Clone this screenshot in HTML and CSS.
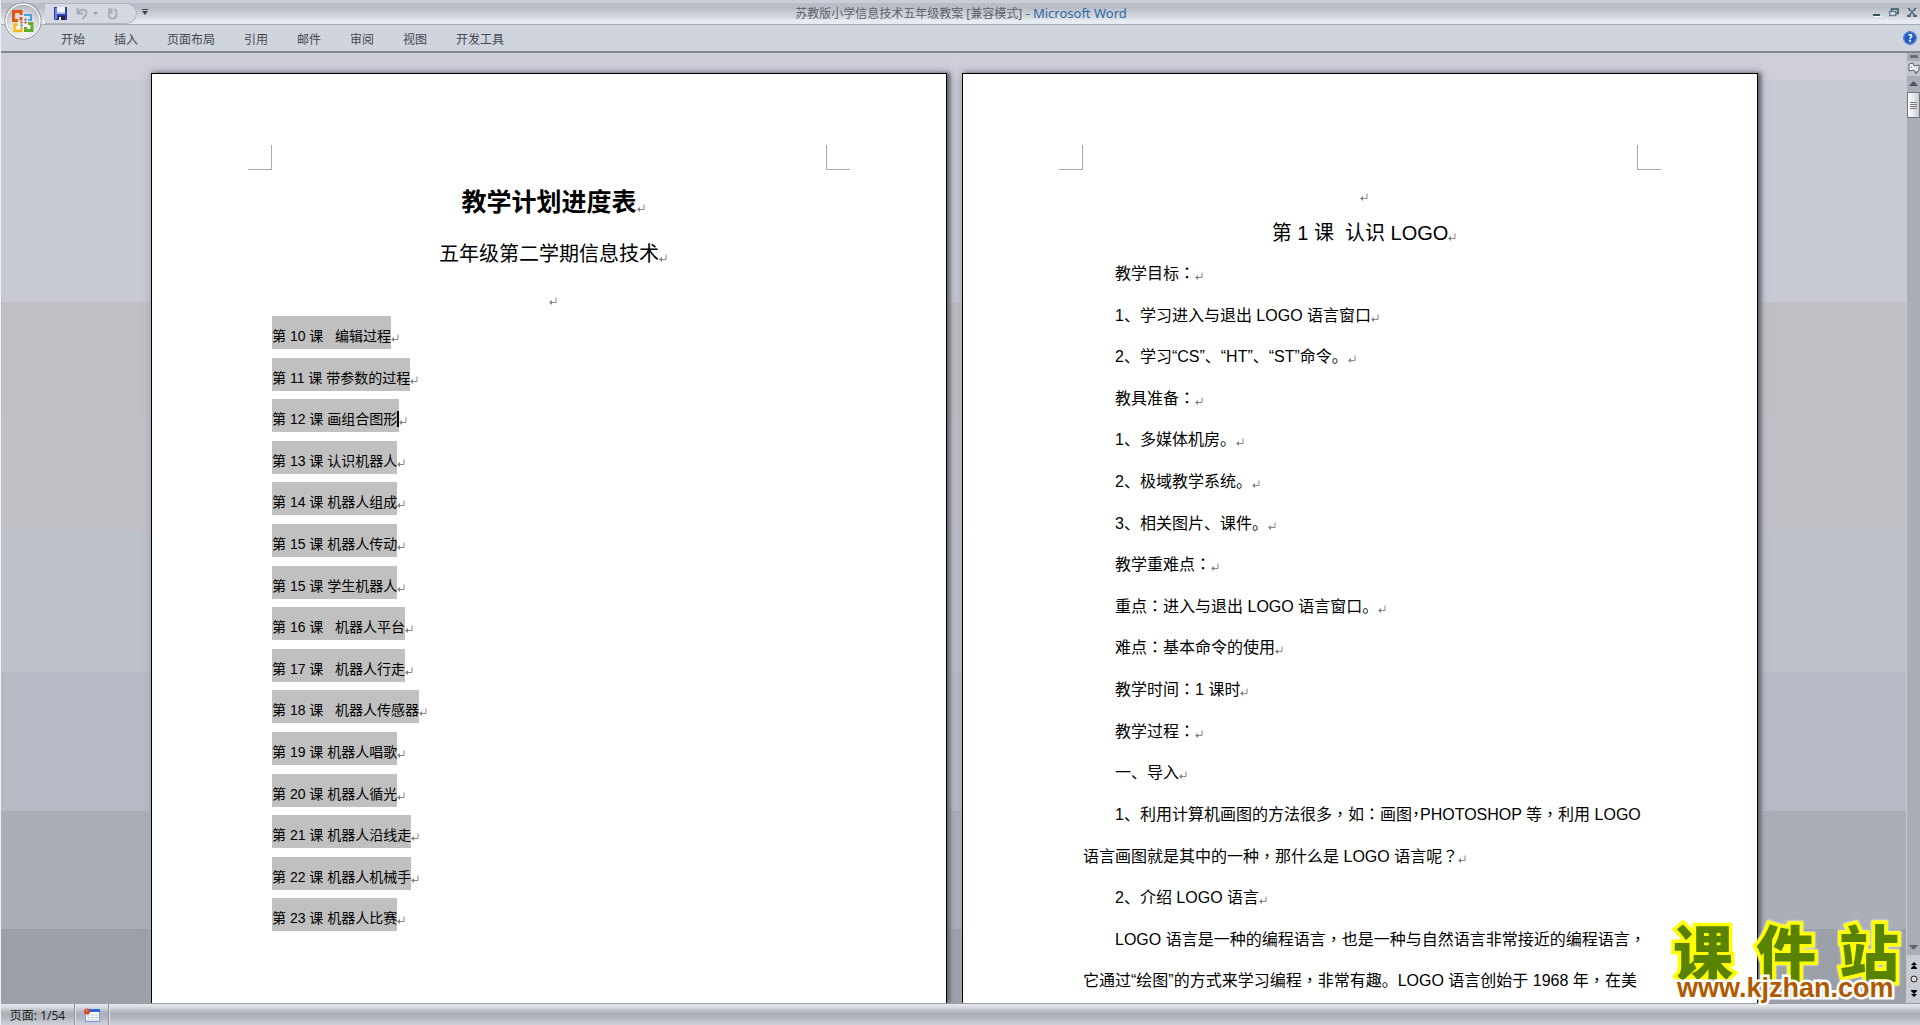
FILE: index.html
```html
<!DOCTYPE html>
<html lang="zh-CN">
<head>
<meta charset="utf-8">
<title>苏教版小学信息技术五年级教案 - Microsoft Word</title>
<link rel="stylesheet" href="styles.css">
</head>
<body>
<svg class="defs" aria-hidden="true">
  <symbol id="ret" viewBox="0 0 8 8"><path d="M7 0.5V5.5H2" fill="none" stroke="#858585"/><path d="M0 5.5L3 3V8Z" fill="#858585"/></symbol>
</svg>
<div class="app">
  <header class="titlebar">
    <div class="quick">
      <button type="button" aria-label="保存"><svg width="13" height="13" viewBox="0 0 13 13"><path d="M0 0H13V13H1L0 12Z" fill="#2c3fa8"/><path d="M1 1H3V12H1Z" fill="#6d86e0"/><rect x="3" y="0" width="8" height="7" fill="#eef2fb"/><rect x="3" y="5" width="8" height="2" fill="#b9c6e8"/><rect x="4" y="9" width="7" height="4" fill="#1b2350"/><rect x="5" y="10" width="2" height="3" fill="#fff"/></svg></button>
      <button type="button" aria-label="撤消"><svg width="12" height="13" viewBox="0 0 12 13"><path d="M1.500 1V6.500H7M2 6C4 2 10 1.500 10.500 5.500C10.700 8.500 8 9 6.500 12" fill="none" stroke="#a9adba" stroke-width="2"/></svg></button>
      <button type="button" aria-label="撤消列表"><svg width="5" height="4" viewBox="0 0 5 4"><path d="M0 0H5L2.500 3Z" fill="#9a9eaa"/></svg></button>
      <button type="button" class="redo" aria-label="恢复"><svg width="11" height="12" viewBox="0 0 11 12"><path d="M1 1.500H4.500V6M4 2C1 4 0.500 10.500 5.500 10.500C10.500 10.500 10.500 4 7.500 1" fill="none" stroke="#a9adba" stroke-width="2"/></svg></button>
    </div>
    <button type="button" class="more" aria-label="自定义快速访问工具栏"><svg width="6" height="6" viewBox="0 0 6 6"><path d="M0 0.500H6" stroke="#444"/><path d="M0 2H6L3 6Z" fill="#444"/></svg></button>
    <h1 class="caption">苏教版小学信息技术五年级教案 [兼容模式] <span>- Microsoft Word</span></h1>
    <div class="winbtns">
      <button type="button" aria-label="最小化"><svg width="8" height="9" viewBox="0 0 8 9"><rect y="6" width="7" height="2" fill="#355"/><rect x="1" y="8" width="7" height="1" fill="#fff"/></svg></button>
      <button type="button" aria-label="还原"><svg width="10" height="9" viewBox="0 0 10 9"><path d="M2.500 3V1H9V5.500H7" fill="none" stroke="#355" stroke-width="1.500"/><rect x="0.700" y="3.500" width="6" height="4" fill="#dfe3ea" stroke="#667890" stroke-width="1.400"/></svg></button>
      <button type="button" aria-label="关闭"><svg width="10" height="9" viewBox="0 0 10 9"><path d="M1 0.500H3M7 0.500H9M2 1L8 7.500M8 1L2 7.500M0 8H4M6 8H10" stroke="#58687c" stroke-width="1.800"/></svg></button>
    </div>
  </header>
  <nav class="ribbon">
    <button type="button">开始</button><button type="button">插入</button><button type="button">页面布局</button><button type="button">引用</button><button type="button">邮件</button><button type="button">审阅</button><button type="button">视图</button><button type="button">开发工具</button>
    <button type="button" class="help" aria-label="帮助">?</button>
  </nav>
  <button type="button" class="office" aria-label="Office 按钮">
    <svg width="38" height="38" viewBox="0 0 38 38">
      <defs><radialGradient id="orb" cx=".5" cy=".7" r=".7"><stop offset="0" stop-color="#fff"/><stop offset=".55" stop-color="#dddee2"/><stop offset="1" stop-color="#a9abb2"/></radialGradient></defs>
      <circle cx="19" cy="19" r="18" fill="url(#orb)" stroke="#73767e"/>
      <circle cx="19" cy="19" r="17" fill="none" stroke="#f4f4f6" stroke-width="1.500"/>
      <path d="M14 9.500H9.500V18.500H14M14 9.500H17V13M17 15V18.500" fill="none" stroke="#e2560f" stroke-width="3"/>
      <path d="M21 14V13H27V18H24" fill="none" stroke="#4aa3e0" stroke-width="2"/>
      <path d="M14 22.500H10.500V29H17.500V25" fill="none" stroke="#f5b81c" stroke-width="2.500"/>
      <path d="M21.500 25V28.500H28V21.500H24" fill="none" stroke="#66ab2d" stroke-width="3"/>
      <path d="M16.500 20.500H18.500M20.500 20.500H22.500" stroke="#d5402b" stroke-width="2"/><path d="M16.500 23.500H18.500M20.500 17.500H22.500" stroke="#3572c6" stroke-width="2"/>
    </svg>
  </button>
  <main class="workspace">
    <div class="desk">
      <article class="page">
        <i class="corner left"></i><i class="corner right"></i>
        <h2 class="title">教学计划进度表<svg class="ret"><use href="#ret"/></svg></h2>
        <p class="subtitle">五年级第二学期信息技术<svg class="ret"><use href="#ret"/></svg></p>
        <p class="blank"><svg class="ret"><use href="#ret"/></svg></p>
        <ul class="lessons">
          <li><mark>第 10 课   编辑过程</mark><svg class="ret"><use href="#ret"/></svg></li>
          <li><mark>第 11 课 带参数的过程</mark><svg class="ret"><use href="#ret"/></svg></li>
          <li><mark class="caret">第 12 课 画组合图形</mark><svg class="ret"><use href="#ret"/></svg></li>
          <li><mark>第 13 课 认识机器人</mark><svg class="ret"><use href="#ret"/></svg></li>
          <li><mark>第 14 课 机器人组成</mark><svg class="ret"><use href="#ret"/></svg></li>
          <li><mark>第 15 课 机器人传动</mark><svg class="ret"><use href="#ret"/></svg></li>
          <li><mark>第 15 课 学生机器人</mark><svg class="ret"><use href="#ret"/></svg></li>
          <li><mark>第 16 课   机器人平台</mark><svg class="ret"><use href="#ret"/></svg></li>
          <li><mark>第 17 课   机器人行走</mark><svg class="ret"><use href="#ret"/></svg></li>
          <li><mark>第 18 课   机器人传感器</mark><svg class="ret"><use href="#ret"/></svg></li>
          <li><mark>第 19 课 机器人唱歌</mark><svg class="ret"><use href="#ret"/></svg></li>
          <li><mark>第 20 课 机器人循光</mark><svg class="ret"><use href="#ret"/></svg></li>
          <li><mark>第 21 课 机器人沿线走</mark><svg class="ret"><use href="#ret"/></svg></li>
          <li><mark>第 22 课 机器人机械手</mark><svg class="ret"><use href="#ret"/></svg></li>
          <li><mark>第 23 课 机器人比赛</mark><svg class="ret"><use href="#ret"/></svg></li>
        </ul>
      </article>
      <article class="page">
        <i class="corner left"></i><i class="corner right"></i>
        <p class="blank"><svg class="ret"><use href="#ret"/></svg></p>
        <h2 class="lesson">第 1 课  认识 LOGO<svg class="ret"><use href="#ret"/></svg></h2>
        <div class="body">
          <p class="in">教学目标<b>：</b><svg class="ret"><use href="#ret"/></svg></p>
          <p class="in">1、学习进入与退出 LOGO 语言窗口<svg class="ret"><use href="#ret"/></svg></p>
          <p class="in">2、学习“CS”、“HT”、“ST”命令。<svg class="ret"><use href="#ret"/></svg></p>
          <p class="in">教具准备<b>：</b><svg class="ret"><use href="#ret"/></svg></p>
          <p class="in">1、多媒体机房。<svg class="ret"><use href="#ret"/></svg></p>
          <p class="in">2、极域教学系统。<svg class="ret"><use href="#ret"/></svg></p>
          <p class="in">3、相关图片、课件。<svg class="ret"><use href="#ret"/></svg></p>
          <p class="in">教学重难点<b>：</b><svg class="ret"><use href="#ret"/></svg></p>
          <p class="in">重点<b>：</b>进入与退出 LOGO 语言窗口。<svg class="ret"><use href="#ret"/></svg></p>
          <p class="in">难点<b>：</b>基本命令的使用<svg class="ret"><use href="#ret"/></svg></p>
          <p class="in">教学时间<b>：</b>1 课时<svg class="ret"><use href="#ret"/></svg></p>
          <p class="in">教学过程<b>：</b><svg class="ret"><use href="#ret"/></svg></p>
          <p class="in">一、导入<svg class="ret"><use href="#ret"/></svg></p>
          <p class="in">1、利用计算机画图的方法很多<b>，</b>如<b>：</b>画图<b class="half">，</b>PHOTOSHOP 等<b>，</b>利用 LOGO</p>
          <p>语言画图就是其中的一种<b>，</b>那什么是 LOGO 语言呢<b>？</b><svg class="ret"><use href="#ret"/></svg></p>
          <p class="in">2、介绍 LOGO 语言<svg class="ret"><use href="#ret"/></svg></p>
          <p class="in">LOGO 语言是一种的编程语言<b>，</b>也是一种与自然语言非常接近的编程语言<b>，</b></p>
          <p>它通过“绘图”的方式来学习编程<b>，</b>非常有趣。LOGO 语言创始于 1968 年<b>，</b>在美</p>
        </div>
      </article>
    </div>
    <div class="scroll">
      <i class="split"></i>
      <button type="button" class="ruler" aria-label="标尺"><svg width="14" height="14" viewBox="0 0 14 14"><path d="M2 2L6 1L7 4L12 3V8L9 12L7 8L2 9Z" fill="#f3f5f8" stroke="#56606f"/><path d="M4 5H5M9 6H10M8 10H11" stroke="#56606f"/></svg></button>
      <button type="button" class="arrow" aria-label="向上滚动"><svg width="9" height="5" viewBox="0 0 9 5"><path d="M4.500 0L9 5H0Z" fill="#4c525e"/></svg></button>
      <div class="track"><div class="thumb"><i></i><i></i><i></i><i></i></div></div>
      <button type="button" class="arrow" aria-label="向下滚动"><svg width="9" height="5" viewBox="0 0 9 5"><path d="M0 0H9L4.500 5Z" fill="#5c6270"/></svg></button>
      <div class="browse">
        <button type="button" aria-label="前一页"><svg width="6" height="7" viewBox="0 0 6 7"><path d="M3 0L6 3H0ZM3 3L6 6H0Z"/><rect y="6" width="6" height="1"/></svg></button>
        <button type="button" aria-label="选择浏览对象"><svg width="8" height="8" viewBox="0 0 8 8"><circle cx="4" cy="4" r="3" fill="#dcdcd8" stroke="#222"/></svg></button>
        <button type="button" aria-label="下一页"><svg width="6" height="7" viewBox="0 0 6 7"><path d="M0 1H6L3 4ZM0 4H6L3 7Z"/><rect width="6" height="1"/></svg></button>
      </div>
    </div>
    <div class="brand">
      <div class="brand-name"><span>课</span><span>件</span><span>站</span></div>
      <div class="brand-url">www.kjzhan.com</div>
    </div>
  </main>
  <footer class="status">
    <button type="button" class="pages">页面: 1/54</button>
    <button type="button" class="macro" aria-label="录制宏"><svg width="16" height="14" viewBox="0 0 16 14"><rect x="1.500" y="1.500" width="14" height="12" fill="#fff" stroke="#7c9bd6"/><rect x="1" y="1" width="15" height="3" fill="#2c66d2"/><path d="M3 7H14M3 9.500H14M3 12H14" stroke="#a9bfe4" stroke-dasharray="3 1"/><circle cx="3" cy="3.500" r="3" fill="#d8452a"/><circle cx="2.500" cy="2.500" r="1" fill="#f39b80"/></svg></button>
  </footer>
</div>
</body>
</html>
```
FILE: styles.css
```css
* { box-sizing: border-box; }
body {
  margin: 0;
  font-family: "Liberation Sans", "Noto Sans CJK SC", sans-serif;
  font-size: 16px;
  color: #000;
  text-autospace: no-autospace;
  text-spacing-trim: space-all;
}
h1, h2, p, ul { margin: 0; padding: 0; font-weight: 400; }
ul { list-style: none; }
button {
  display: flex;
  align-items: center;
  justify-content: center;
  margin: 0;
  padding: 0;
  border: 0;
  background: none;
  font: inherit;
  color: inherit;
}
.defs { position: absolute; width: 0; height: 0; }
.app {
  position: relative;
  display: flex;
  flex-direction: column;
  height: 100vh;
  overflow: hidden;
  border-left: 1px solid #eef0f4;
}

/* title bar */
.titlebar {
  display: grid;
  grid-template-columns: auto 1fr auto 1fr;
  align-items: center;
  height: 25px;
  padding: 0 3px 4px 44px;
  border-bottom: 1px solid #a6aab4;
  background: linear-gradient(#c9cdd6 0 3px, #b9bdc7 3px 8px, #c3c7cf 11px, #dcdfe3 19px, #e6eaf3 20px);
}
.quick {
  display: flex;
  align-items: center;
  gap: 5px;
  width: 92px;
  height: 21px;
  margin-top: 3px;
  padding-left: 9px;
  border: 1px solid #b2b6c1;
  border-left: 0;
  border-radius: 0 11px 11px 0;
  background: #d5d8e0;
}
.quick button:nth-child(2), .redo { margin-left: 4px; }
.more { justify-self: start; margin-left: 5px; }
.caption {
  margin-right: 132px;
  padding-top: 2px;
  font-family: "Noto Sans", "Noto Sans CJK SC", sans-serif;
  font-size: 12px;
  line-height: 20px;
  white-space: nowrap;
  color: #5c606a;
}
.caption span { color: #2c69a8; font-size: 13px; }
.winbtns { display: flex; justify-content: flex-end; gap: 8px; }

/* ribbon */
.ribbon {
  display: flex;
  align-items: center;
  gap: 29px;
  height: 28px;
  padding: 0 3px 0 60px;
  border-bottom: 2px solid #838994;
  background: #d0d4dd;
  font-family: "Noto Sans CJK SC", sans-serif;
  font-size: 12px;
  color: #444852;
}
.help {
  width: 14px;
  height: 14px;
  margin-left: auto;
  border: 1px solid #fff;
  border-radius: 50%;
  outline: 1px solid #4a76c0;
  outline-offset: -1px;
  background: #1d5cc9;
  color: #fff;
  font-size: 10px;
  font-weight: 700;
  line-height: 10px;
}
.office { position: absolute; left: 3px; top: 2px; }

/* document area */
.workspace {
  position: relative;
  flex: 1;
  min-height: 0;
  display: flex;
  background: linear-gradient(#d0ced9 0 27px, #c8cad4 27px 249px, #bfbfc4 249px 364px, #c0c1c6 364px 479px, #bcc1ca 479px 619px, #b6bac4 619px 758px, #aaaeb7 758px 876px, #9b9fa8 876px);
}
.desk {
  flex: 1;
  display: flex;
  justify-content: center;
  gap: 15px;
  padding: 20px 0 0 2px;
  overflow: hidden;
}
.page {
  position: relative;
  flex: none;
  width: 796px;
  padding: 104px 120px 0;
  border: 1px solid #000;
  border-bottom: 0;
  background: #fff;
  box-shadow: 3px 0 4px #5e626c, 1px 0 8px 2px #a6aab4;
}
.corner {
  position: absolute;
  top: 71px;
  width: 24px;
  height: 25px;
  border-bottom: 1px solid #aaa;
}
.corner.left { left: 96px; border-right: 1px solid #aaa; }
.corner.right { right: 96px; border-left: 1px solid #aaa; }
.ret { width: 8px; height: 8px; vertical-align: -1px; }
.title, .subtitle, .blank, .lesson {
  padding-left: 8px;
  text-align: center;
  white-space: pre;
}
.title { font-size: 25px; font-weight: 700; line-height: 48px; }
.subtitle { font-size: 20px; line-height: 56px; }
.blank { line-height: 34px; }
.lesson { font-size: 20px; line-height: 42px; }
.lessons {
  display: grid;
  grid-auto-rows: 1fr;
  height: 624px;
  font-size: 14px;
  white-space: pre;
}
.lessons li { display: flex; align-items: flex-start; }
.lessons .ret { margin-top: 18px; }
mark {
  height: 33px;
  padding-top: 8px;
  background: #c0c0c0;
  color: #000;
  line-height: 25px;
}
.caret {
  padding-right: 2px;
  background: linear-gradient(#000, #000) right 12px / 2px 16px no-repeat #c0c0c0;
}
.body {
  display: grid;
  grid-template-rows: repeat(18, minmax(0, 1fr));
  height: 749px;
  line-height: 40px;
  white-space: pre;
}
.in { padding-left: 32px; }

/* full-width punctuation centred in its square */
.body b {
  font-family: "Noto Sans CJK TC", sans-serif;
  font-weight: 400;
  font-feature-settings: "locl" 0;
  line-height: 1;
}
.body .half { font-feature-settings: "locl" 0, "halt" 1; }

/* scroll bar */
.scroll {
  display: flex;
  flex-direction: column;
  align-items: center;
  width: 14px;
  background: #a9adb6;
  border-left: 1px solid #c6c9d0;
}
.split { width: 8px; height: 3px; margin: 2px 0 3px; background: #6d6f74; }
.ruler { width: 14px; height: 15px; background: #c3c7cf; }
.arrow { width: 14px; height: 15px; }
.track { flex: 1; }
.thumb {
  display: flex;
  flex-direction: column;
  align-items: center;
  justify-content: center;
  gap: 1px;
  width: 13px;
  height: 26px;
  margin-top: 1px;
  border: 1px solid #70747c;
  border-radius: 1px;
  background: linear-gradient(90deg, #fff, #e2e3e7 60%, #c8cad0);
}
.thumb i { width: 7px; height: 1px; background: #777b84; }
.browse {
  display: flex;
  flex-direction: column;
  align-items: center;
  justify-content: space-evenly;
  width: 14px;
  height: 48px;
  background: #c8cbd3;
}

/* site badge over the document corner */
.brand {
  position: absolute;
  right: 21px;
  bottom: 0;
  width: 226px;
}
.brand-name {
  display: flex;
  justify-content: space-between;
  font-family: "Noto Sans CJK SC", sans-serif;
  font-size: 60px;
  font-weight: 900;
  line-height: 48px;
  color: #588200;
  -webkit-text-stroke: 7px #ff0;
  paint-order: stroke fill;
  filter: drop-shadow(0 0 1px #fff);
}
.brand-url {
  position: relative;
  font-size: 27px;
  font-weight: 700;
  line-height: 28px;
  padding: 0 0 1px 4px;
  color: #b05a00;
  -webkit-text-stroke: 5px #fff;
  paint-order: stroke fill;
}

/* status bar */
.status {
  display: flex;
  height: 22px;
  border-top: 1px solid #9a9ea8;
  background: linear-gradient(#dfe2e7 0 2px, #c9ccd4 5px, #b8bbc4 7px, #a9adb6 10px, #b4b7c0 14px, #c9ccd4 19px, #ced0d8);
  font-family: "Noto Sans", "Noto Sans CJK SC", sans-serif;
  font-size: 12px;
  color: #222;
}
.pages { width: 74px; border-right: 1px solid #8e929c; }
.macro { width: 34px; border-right: 1px solid #8e929c; box-shadow: inset 1px 0 #e2e4ea, 1px 0 #e2e4ea; }
```
